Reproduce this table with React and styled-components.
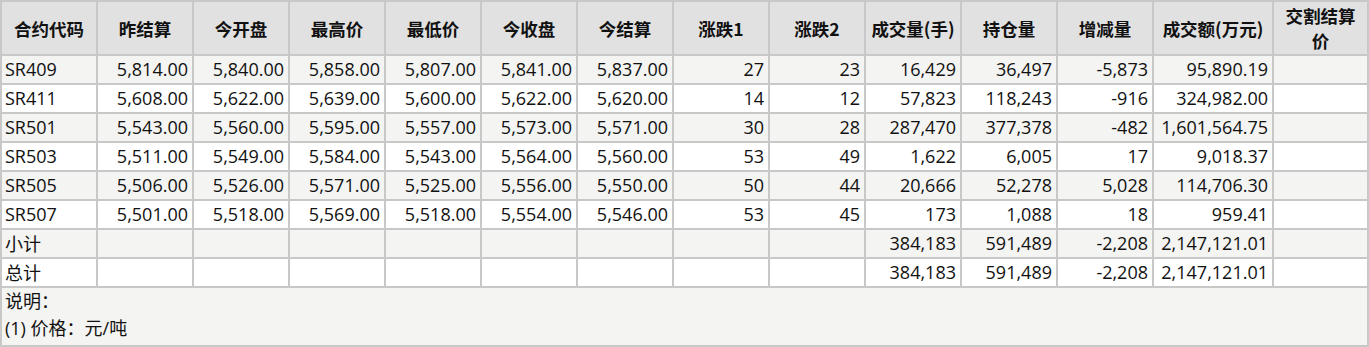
import React from "react";
import styled, { createGlobalStyle } from "styled-components";

const Global = createGlobalStyle`
  html, body { margin: 0; padding: 0; background: #ffffff; }
  body { font-family: "Open Sans", "Noto Sans CJK SC", sans-serif; color: #111; }
`;

const Grid = styled.div`
  display: grid;
  grid-template-columns: repeat(12, 94px) 118px 93px;
  grid-template-rows: 52px repeat(8, 27px) 57px;
  gap: 2px;
  padding: 2px;
  width: 1369px;
  box-sizing: border-box;
  background: #c8c8c8;
  font-size: 18px;
`;

const HeadCell = styled.div`
  background: #e1e1e1;
  font-weight: 700;
  font-family: "Noto Sans CJK SC", "Open Sans", sans-serif;
  font-size: 17.5px;
  line-height: 25px;
  display: flex;
  align-items: center;
  justify-content: center;
  text-align: center;
  padding: 0 4px;
  box-sizing: border-box;
`;

const HeadRow = styled.div`
  display: contents;
`;

const Cell = styled.div`
  background: ${(p) => (p.$shade ? "#f4f4f2" : "#ffffff")};
  display: flex;
  align-items: center;
  justify-content: ${(p) => (p.$left ? "flex-start" : "flex-end")};
  padding: ${(p) => (p.$left ? "0 3px" : "0 4px 0 3px")};
  white-space: nowrap;
  box-sizing: border-box;
  line-height: 27px;
  font-family: ${(p) =>
    p.$cjk ? `"Noto Sans CJK SC", sans-serif` : `"Open Sans", "Noto Sans CJK SC", sans-serif`};
`;

const Note = styled.div`
  grid-column: 1 / -1;
  background: #f4f4f2;
  padding: 0 3px;
  box-sizing: border-box;
  font-family: "Open Sans", "Noto Sans CJK SC", sans-serif;
  font-size: 18px;
  line-height: 27px;
`;

const NoteLine = styled.div`
  white-space: nowrap;
`;

const headers = [
  "合约代码", "昨结算", "今开盘", "最高价", "最低价", "今收盘", "今结算",
  "涨跌1", "涨跌2", "成交量(手)", "持仓量", "增减量", "成交额(万元)", "交割结算价",
];

const rows = [
  ["SR409", "5,814.00", "5,840.00", "5,858.00", "5,807.00", "5,841.00", "5,837.00", "27", "23", "16,429", "36,497", "-5,873", "95,890.19", ""],
  ["SR411", "5,608.00", "5,622.00", "5,639.00", "5,600.00", "5,622.00", "5,620.00", "14", "12", "57,823", "118,243", "-916", "324,982.00", ""],
  ["SR501", "5,543.00", "5,560.00", "5,595.00", "5,557.00", "5,573.00", "5,571.00", "30", "28", "287,470", "377,378", "-482", "1,601,564.75", ""],
  ["SR503", "5,511.00", "5,549.00", "5,584.00", "5,543.00", "5,564.00", "5,560.00", "53", "49", "1,622", "6,005", "17", "9,018.37", ""],
  ["SR505", "5,506.00", "5,526.00", "5,571.00", "5,525.00", "5,556.00", "5,550.00", "50", "44", "20,666", "52,278", "5,028", "114,706.30", ""],
  ["SR507", "5,501.00", "5,518.00", "5,569.00", "5,518.00", "5,554.00", "5,546.00", "53", "45", "173", "1,088", "18", "959.41", ""],
  ["小计", "", "", "", "", "", "", "", "", "384,183", "591,489", "-2,208", "2,147,121.01", ""],
  ["总计", "", "", "", "", "", "", "", "", "384,183", "591,489", "-2,208", "2,147,121.01", ""],
];

export default function App() {
  return (
    <>
      <Global />
      <Grid>
        <HeadRow>
          {headers.map((h) => (
            <HeadCell key={h}>{h}</HeadCell>
          ))}
        </HeadRow>
        {rows.map((r, ri) =>
          r.map((v, ci) => (
            <Cell
              key={`${ri}-${ci}`}
              $shade={ri % 2 === 0}
              $left={ci === 0}
              $cjk={ci === 0 && ri >= 6}
            >
              {v}
            </Cell>
          ))
        )}
        <Note>
          <NoteLine>说明：</NoteLine>
          <NoteLine>(1) 价格：元/吨</NoteLine>
        </Note>
      </Grid>
    </>
  );
}
